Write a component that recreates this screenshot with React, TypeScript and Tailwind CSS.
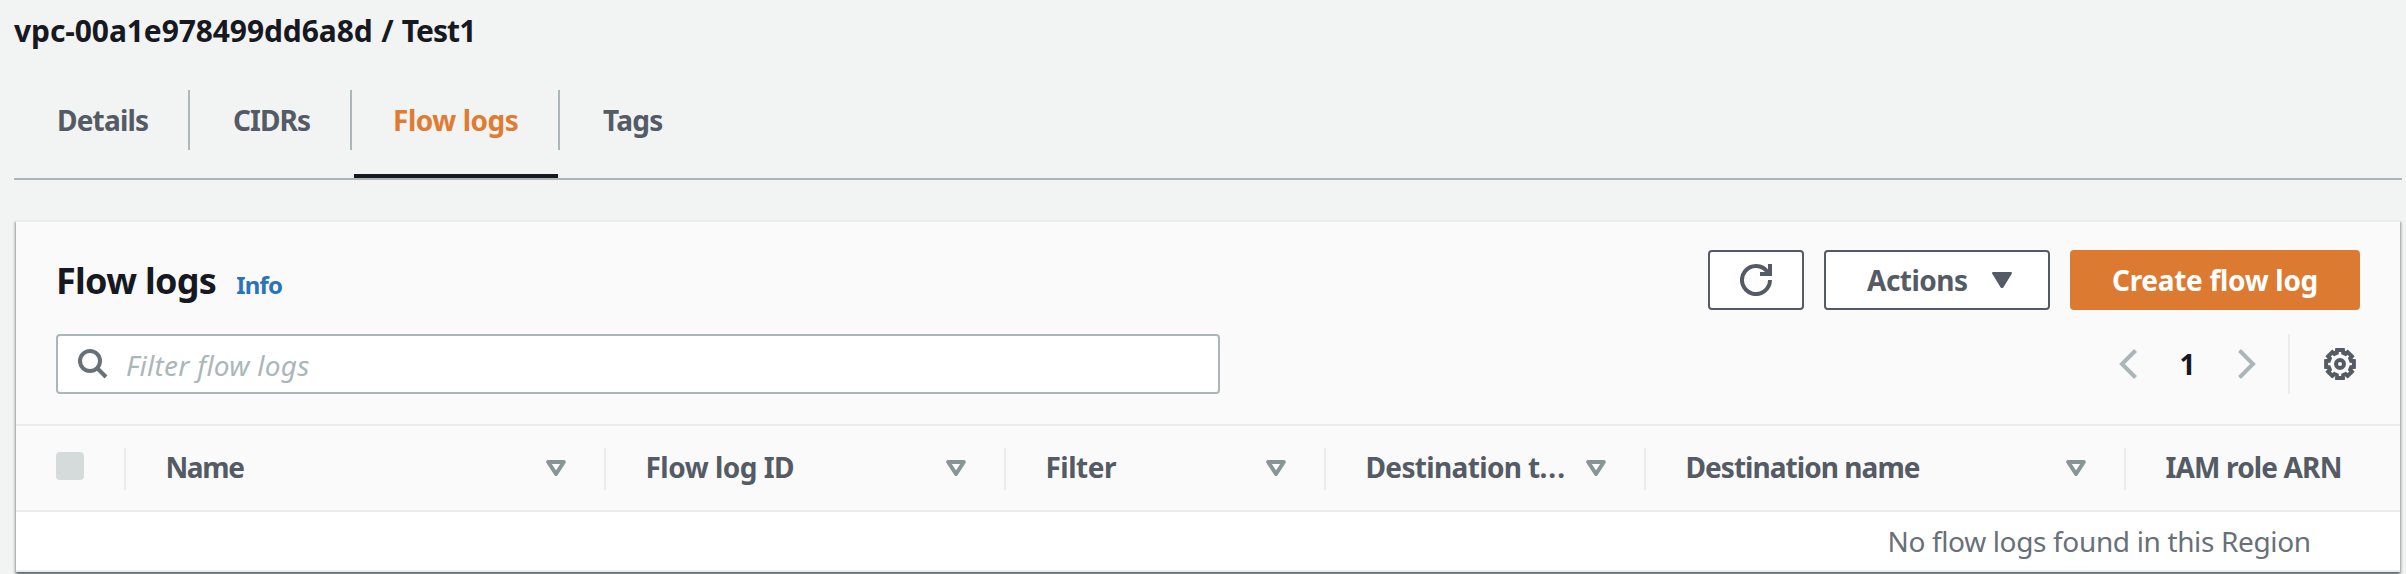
import type { ReactNode } from "react";

function SearchIcon() {
  return (
    <svg className="size-[30px] shrink-0" viewBox="0 0 30 30" fill="none" stroke="#687078" strokeWidth="4">
      <circle cx="12" cy="12" r="10" />
      <path d="M19.5 19.5L28 28" />
    </svg>
  );
}

function RefreshIcon() {
  return (
    <svg className="size-8" viewBox="0 0 32 32" fill="none" stroke="#545b64" strokeWidth="4">
      <path d="M30 16A14 14 0 1 1 27.6 8.2" />
      <path d="M30 0V10H20" />
    </svg>
  );
}

function CaretDown() {
  return (
    <svg className="h-4 w-5" viewBox="0 0 20 16" fill="#545b64" stroke="#545b64" strokeWidth="2" strokeLinejoin="round">
      <path d="M1 1H19L10.5 15H9.5Z" />
    </svg>
  );
}

function SortIcon() {
  return (
    <svg className="mt-[34px] h-4 w-5 shrink-0" viewBox="0 0 20 16" fill="none" stroke="#879596" strokeWidth="4" strokeLinejoin="round">
      <path d="M2.2 2H17.8L10 14Z" />
    </svg>
  );
}

function Chevron({ d }: { d: string }) {
  return (
    <svg className="h-[30px] w-[18px]" viewBox="0 0 18 30" fill="none" stroke="#aab7b8" strokeWidth="4">
      <path d={d} />
    </svg>
  );
}

const gearOutline =
  Array.from({ length: 8 }, (_, k) =>
    [
      [-12, 14.2],
      [12, 14.2],
      [16, 11.6],
      [29, 11.6],
    ].map(([a, r]) => {
      const t = ((k * 45 + a) * Math.PI) / 180;
      return `${(16 + r * Math.cos(t)).toFixed(2)} ${(16 + r * Math.sin(t)).toFixed(2)}`;
    }),
  )
    .flat()
    .map((p, i) => (i ? "L" : "M") + p)
    .join("") + "Z";

function GearIcon() {
  return (
    <svg className="size-8" viewBox="0 0 32 32" fill="none" stroke="#545b64" strokeWidth="4">
      <path d={gearOutline} />
      <circle cx="16" cy="16" r="4" />
    </svg>
  );
}

function Tab({ className, active, last, children }: { className: string; active?: boolean; last?: boolean; children: ReactNode }) {
  return (
    <li className={`relative h-[88px] ${active ? "text-[#e07b32]" : "text-[#545b64]"}`}>
      <div className={`h-[60px] whitespace-nowrap leading-[60px] ${last ? "" : "border-r-2 border-[#aab7b8]"} ${className}`}>{children}</div>
      {active && <div className="absolute bottom-0 left-0.5 right-0.5 h-1 bg-[#16191f]" />}
    </li>
  );
}

function Column({ className, label, labelClass, sortable = true }: { className: string; label: ReactNode; labelClass: string; sortable?: boolean }) {
  return (
    <div className={`flex h-[84px] justify-between pl-[39.5px] ${className}`}>
      <span className={`mt-5 whitespace-nowrap leading-[42px] ${labelClass}`}>{label}</span>
      {sortable && (
        <div className="flex">
          <SortIcon />
          <div className="ml-[38px] mt-[22px] h-[42px] w-0.5 bg-[#eaeded]" />
        </div>
      )}
    </div>
  );
}

export default function App() {
  return (
    <div className="h-[574px] w-[2406px] overflow-hidden bg-[#f2f3f3] font-['Noto_Sans',sans-serif] text-[28px] font-bold text-[#545b64]">
      <h1 className="h-[60px] whitespace-nowrap pl-3.5 text-[30px] leading-[62px] text-[#16191f]">
        <span className="tracking-[-0.1px]">vpc-00a1e978499dd6a8d</span>
        <span className="pl-px"> / </span>
        <span className="tracking-[-0.9px]">Test1</span>
      </h1>

      <ul className="ml-3.5 mr-1 mt-[30px] flex border-b-2 border-[#aab7b8]">
        <Tab className="w-[176px] pl-[43px] tracking-[-0.8px]">Details</Tab>
        <Tab className="w-[162px] pl-[43px] tracking-[-0.95px]">CIDRs</Tab>
        <Tab active className="w-[208px] pl-[41px] tracking-[-0.45px]">Flow logs</Tab>
        <Tab last className="pl-[43px] tracking-[-0.7px]">Tags</Tab>
      </ul>

      <section className="ml-4 mr-1.5 mt-10 h-[352px] border-y-2 border-[#eaeded] bg-[#fafafa] shadow-[0_2px_2px_0_rgba(0,28,36,0.5),2px_2px_2px_0_rgba(0,28,36,0.15),-2px_2px_2px_0_rgba(0,28,36,0.15)]">
        <div className="flex h-[88px] items-end justify-between pl-10 pr-10">
          <div className="flex h-[60px] items-baseline leading-[62px]">
            <h2 className="text-[36px] tracking-[-0.7px] text-[#16191f]">Flow logs</h2>
            <a className="ml-5 text-[24px] tracking-[-0.8px] text-[#2a72bb]">Info</a>
          </div>
          <div className="flex h-[60px] gap-5">
            <button className="flex w-24 items-center justify-center rounded-[4px] border-2 border-[#545b64] bg-white">
              <RefreshIcon />
            </button>
            <button className="flex w-[226px] items-center rounded-[4px] border-2 border-[#545b64] bg-white pl-[41px]">
              <span className="w-[125px] pb-px text-left tracking-[-0.5px]">Actions</span>
              <CaretDown />
            </button>
            <button className="w-[290px] rounded-[4px] bg-[#dd7a32] pb-px text-center tracking-[-0.3px] text-white">Create flow log</button>
          </div>
        </div>

        <div className="mt-6 flex h-[60px] justify-between pl-10 pr-11">
          <div className="flex w-[1164px] items-center rounded-[4px] border-2 border-[#aab7b8] bg-white pl-5">
            <SearchIcon />
            <span className="ml-[18px] pt-0.5 font-normal italic tracking-[0.25px] text-[#aab7b8]">Filter flow logs</span>
          </div>
          <div className="flex items-center">
            <Chevron d="M16.5 1.5L3 15L16.5 28.5" />
            <span className="w-[101px] text-center text-[#16191f]">1</span>
            <Chevron d="M1.5 1.5L15 15L1.5 28.5" />
            <div className="ml-8 mr-[34px] h-[60px] w-0.5 bg-[#eaeded]" />
            <GearIcon />
          </div>
        </div>

        <div className="mt-[30px] flex h-[88px] border-y-2 border-[#eaeded]">
          <div className="flex w-[110px] pl-10">
            <div className="mt-[26px] size-7 rounded-[4px] bg-[#d5dbdb]" />
            <div className="ml-10 mt-[22px] h-[42px] w-0.5 bg-[#eaeded]" />
          </div>
          <Column className="w-[480px]" label="Name" labelClass="tracking-[-1.4px]" />
          <Column className="w-[400px]" label="Flow log ID" labelClass="tracking-[-0.5px]" />
          <Column className="w-[320px]" label="Filter" labelClass="tracking-[-0.5px]" />
          <Column
            className="w-[320px]"
            label={<>Destination t<span className="tracking-[1px]">...</span></>}
            labelClass="tracking-[-0.65px]"
          />
          <Column className="w-[480px]" label="Destination name" labelClass="tracking-[-0.95px]" />
          <Column className="w-[274px]" label="IAM role ARN" labelClass="tracking-[-0.85px]" sortable={false} />
        </div>

        <p className="h-[58px] whitespace-nowrap bg-white pl-[1871.5px] font-normal leading-[58px] tracking-[-0.35px] text-[#687078]">
          No flow logs found in this Region
        </p>
      </section>
    </div>
  );
}
